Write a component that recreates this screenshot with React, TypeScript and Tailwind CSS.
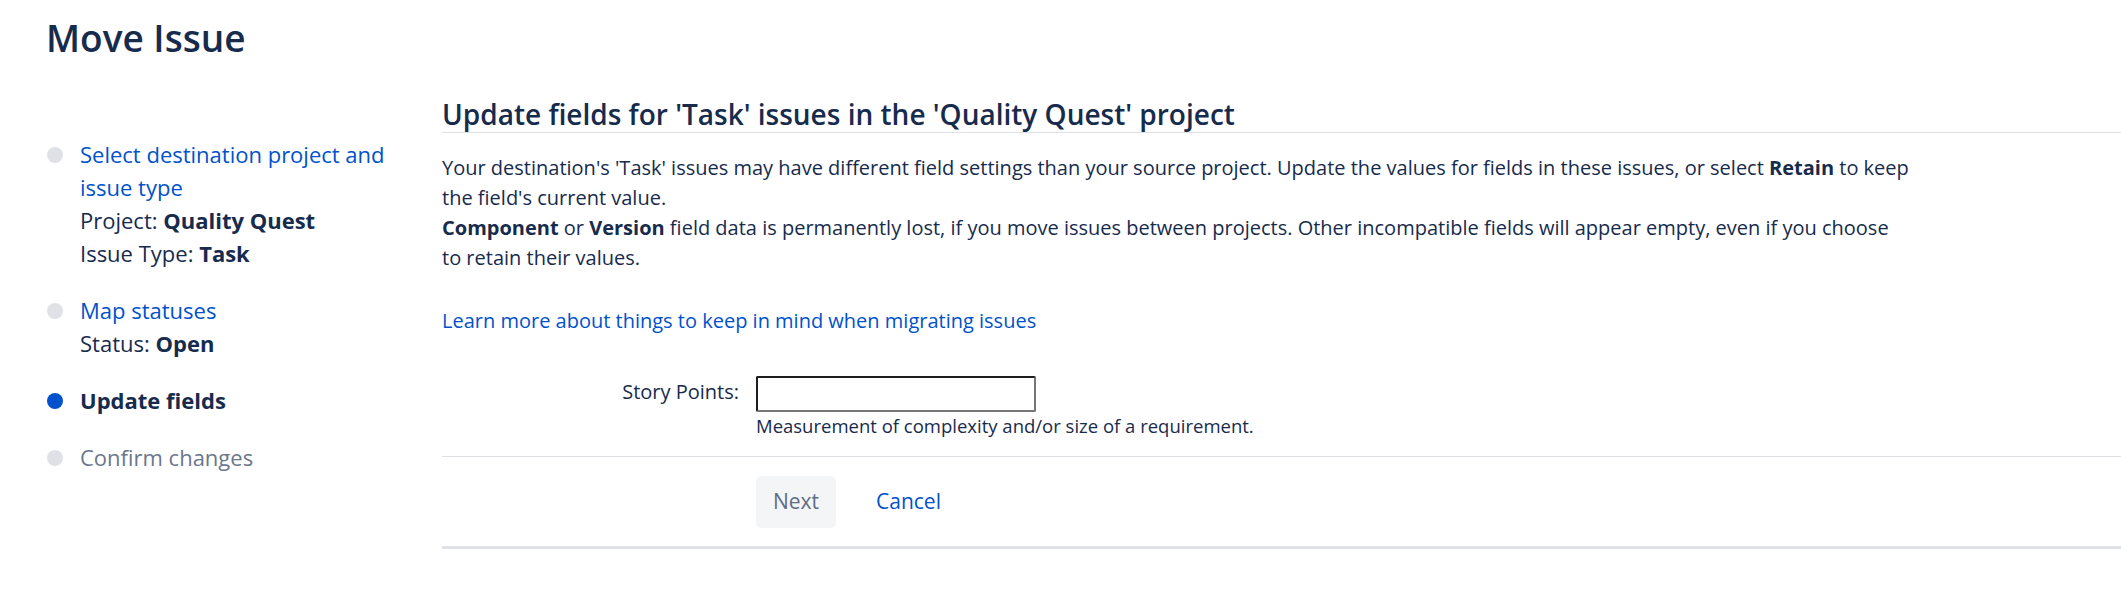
import React from 'react';

type StepState = 'done' | 'current' | 'todo';

interface Step {
  label: string;
  state: StepState;
  details?: [string, string][];
}

const steps: Step[] = [
  {
    label: 'Select destination project and issue type',
    state: 'done',
    details: [
      ['Project', 'Quality Quest'],
      ['Issue Type', 'Task'],
    ],
  },
  { label: 'Map statuses', state: 'done', details: [['Status', 'Open']] },
  { label: 'Update fields', state: 'current' },
  { label: 'Confirm changes', state: 'todo' },
];

const StepItem: React.FC<{ step: Step }> = ({ step }) => {
  const labelClass =
    step.state === 'current'
      ? 'font-bold text-[#172b4d]'
      : step.state === 'done'
        ? 'text-[#0052cc] cursor-pointer hover:underline'
        : 'text-[#6b778c]';

  return (
    <li className="flex gap-[17px] mb-[24px]">
      {/* dot sits on the first text line */}
      <div className="h-[33px] flex items-center shrink-0">
        <span
          className={`block w-4 h-4 rounded-full ${
            step.state === 'current' ? 'bg-[#0052cc]' : 'bg-[#dfe1e6]'
          }`}
        />
      </div>
      <div className="leading-[33px]">
        <div className={labelClass}>{step.label}</div>
        {step.details?.map(([k, v]) => (
          <div key={k} className="text-[#172b4d]">
            {k}: <span className="font-bold">{v}</span>
          </div>
        ))}
      </div>
    </li>
  );
};

export default function App() {
  return (
    <div className="min-h-[589px] bg-white text-[#172b4d] font-['Open_Sans','Noto_Sans',sans-serif]">
      <header className="pl-[46px] pt-[14px]">
        <h1 className="text-[37px] leading-[48px] font-semibold">Move Issue</h1>
      </header>

      <div className="flex">
        {/* wizard steps */}
        <nav className="w-[442px] shrink-0 pl-[47px] pr-[40px] pt-[76px] text-[22px]">
          <ol>
            {steps.map((s) => (
              <StepItem key={s.label} step={s} />
            ))}
          </ol>
        </nav>

        {/* form */}
        <main className="flex-1 min-w-0 pt-[34px]">
          <h2 className="text-[28px] leading-[36px] font-semibold border-b border-[#dfe1e6]">
            Update fields for 'Task' issues in the 'Quality Quest' project
          </h2>

          <p className="mt-[20px] max-w-[1500px] text-[20px] leading-[30px]">
            Your destination's 'Task' issues may have different field settings than your source
            project. Update the values for fields in these issues, or select{' '}
            <strong className="font-bold">Retain</strong> to keep the field's current value.
            <br />
            <strong className="font-bold">Component</strong> or{' '}
            <strong className="font-bold">Version</strong> field data is permanently lost, if you
            move issues between projects. Other incompatible fields will appear empty, even if you
            choose
            <br />
            to retain their values.
          </p>

          <p className="mt-[33px] text-[20px] leading-[30px]">
            <a href="#" className="text-[#0052cc] hover:underline">
              Learn more about things to keep in mind when migrating issues
            </a>
          </p>

          <div className="mt-[40px] grid grid-cols-[297px_1fr] gap-x-[17px]">
            <label htmlFor="story-points" className="text-right text-[20px] leading-[30px] pt-px">
              Story Points:
            </label>
            <input
              id="story-points"
              type="text"
              className="w-[280px] h-[36px] border-2 border-t-[#1e1e1e] border-l-[#1e1e1e] border-r-[#767676] border-b-[#767676] rounded-[2px] bg-white px-1 text-[18px] outline-none"
            />
            <div />
            <div className="mt-[2px] text-[18.5px] leading-[24px]">
              Measurement of complexity and/or size of a requirement.
            </div>
          </div>

          <div className="mt-[18px] border-t border-[#dfe1e6] pt-[19px] pb-[18px] pl-[314px] flex items-center gap-[16px]">
            <button
              type="button"
              disabled
              className="w-[80px] h-[52px] rounded-[5px] bg-[#f4f5f7] text-[21px] text-[#5e6c84]"
            >
              Next
            </button>
            <button type="button" className="px-[24px] h-[52px] text-[21px] text-[#0052cc] hover:underline">
              Cancel
            </button>
          </div>
          <div className="border-t-[3px] border-[#dfe1e6]" />
        </main>
      </div>
    </div>
  );
}
